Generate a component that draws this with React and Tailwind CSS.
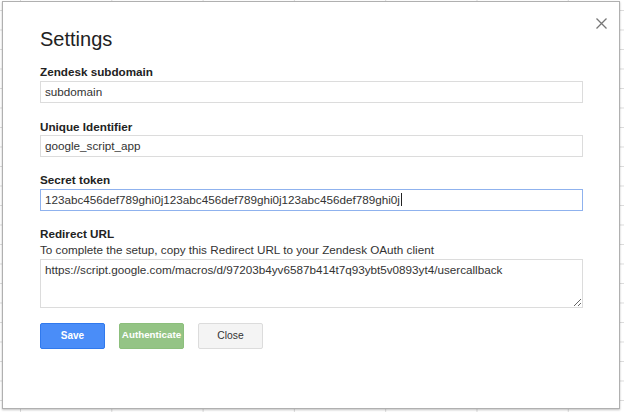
import React from 'react';

const FONT = { fontFamily: '"Liberation Sans", Arial, sans-serif' };

function Field({ label, value, focused, className = '' }) {
  return (
    <div className={className}>
      <div className="text-[11.7px] leading-[14px] font-bold text-[#222]">{label}</div>
      <div
        className={
          'mt-[1.5px] h-[22px] w-[543px] border px-[4px] text-[11.7px] leading-[20px] text-[#333] whitespace-nowrap overflow-hidden flex items-center ' +
          (focused ? 'border-[#8fb2ee]' : 'border-[#dcdcdc]')
        }
      >
        <span>{value}</span>
        {focused && <span className="ml-[1px] inline-block w-px h-[13px] bg-[#222]" />}
      </div>
    </div>
  );
}

export default function App() {
  return (
    <div
      style={FONT}
      className="w-[624px] h-[412px] overflow-hidden bg-white bg-[linear-gradient(to_right,#dcdcdc_1px,transparent_1px),linear-gradient(to_bottom,#dcdcdc_1px,transparent_1px)] [background-size:91.3px_19.5px] [background-position:20px_10px] pt-[1px] pl-[2px]"
    >
      <div className="relative w-[618px] h-[408px] bg-white border border-[#b0b0b0] shadow-[0_1px_2px_rgba(0,0,0,0.25)] pl-[37px] pt-[25px]">
        <button className="absolute top-[16px] right-[12px] w-[11px] h-[11px] flex items-center justify-center">
          <svg width="11" height="11" viewBox="0 0 11 11" fill="none" stroke="#777" strokeWidth="1.3">
            <path d="M0.5 0.5 L10.5 10.5 M10.5 0.5 L0.5 10.5" />
          </svg>
        </button>

        <div className="text-[20px] leading-[24px] text-[#222]">Settings</div>

        <Field className="mt-[14px]" label="Zendesk subdomain" value="subdomain" />
        <Field className="mt-[17px]" label="Unique Identifier" value="google_script_app" />
        <Field
          className="mt-[16px]"
          label="Secret token"
          value="123abc456def789ghi0j123abc456def789ghi0j123abc456def789ghi0j"
          focused
        />

        <div className="mt-[16px]">
          <div className="text-[11.7px] leading-[14px] font-bold text-[#222]">Redirect URL</div>
          <div className="mt-[2px] text-[11.7px] leading-[14px] text-[#333]">
            To complete the setup, copy this Redirect URL to your Zendesk OAuth client
          </div>
          <textarea
            readOnly
            style={FONT}
            className="block mt-[2px] h-[49px] w-[543px] border border-[#dcdcdc] px-[4px] pt-[3px] text-[11.7px] leading-[14px] text-[#333] outline-none resize"
            defaultValue="https://script.google.com/macros/d/97203b4yv6587b414t7q93ybt5v0893yt4/usercallback"
          />
        </div>

        <div className="mt-[15px] flex gap-[14px]">
          <button className="h-[26px] w-[65px] rounded-[2px] border border-[#3079ed] bg-[#4a8df8] text-white text-[10px] font-bold whitespace-nowrap">
            Save
          </button>
          <button className="h-[26px] w-[65px] rounded-[2px] border border-[#8cbf7c] bg-[#94c485] text-white text-[9.8px] font-bold whitespace-nowrap">
            Authenticate
          </button>
          <button className="h-[26px] w-[65px] rounded-[2px] border border-[#dcdcdc] bg-[#f4f4f4] text-[#333] text-[10.3px] whitespace-nowrap">
            Close
          </button>
        </div>
      </div>
    </div>
  );
}
